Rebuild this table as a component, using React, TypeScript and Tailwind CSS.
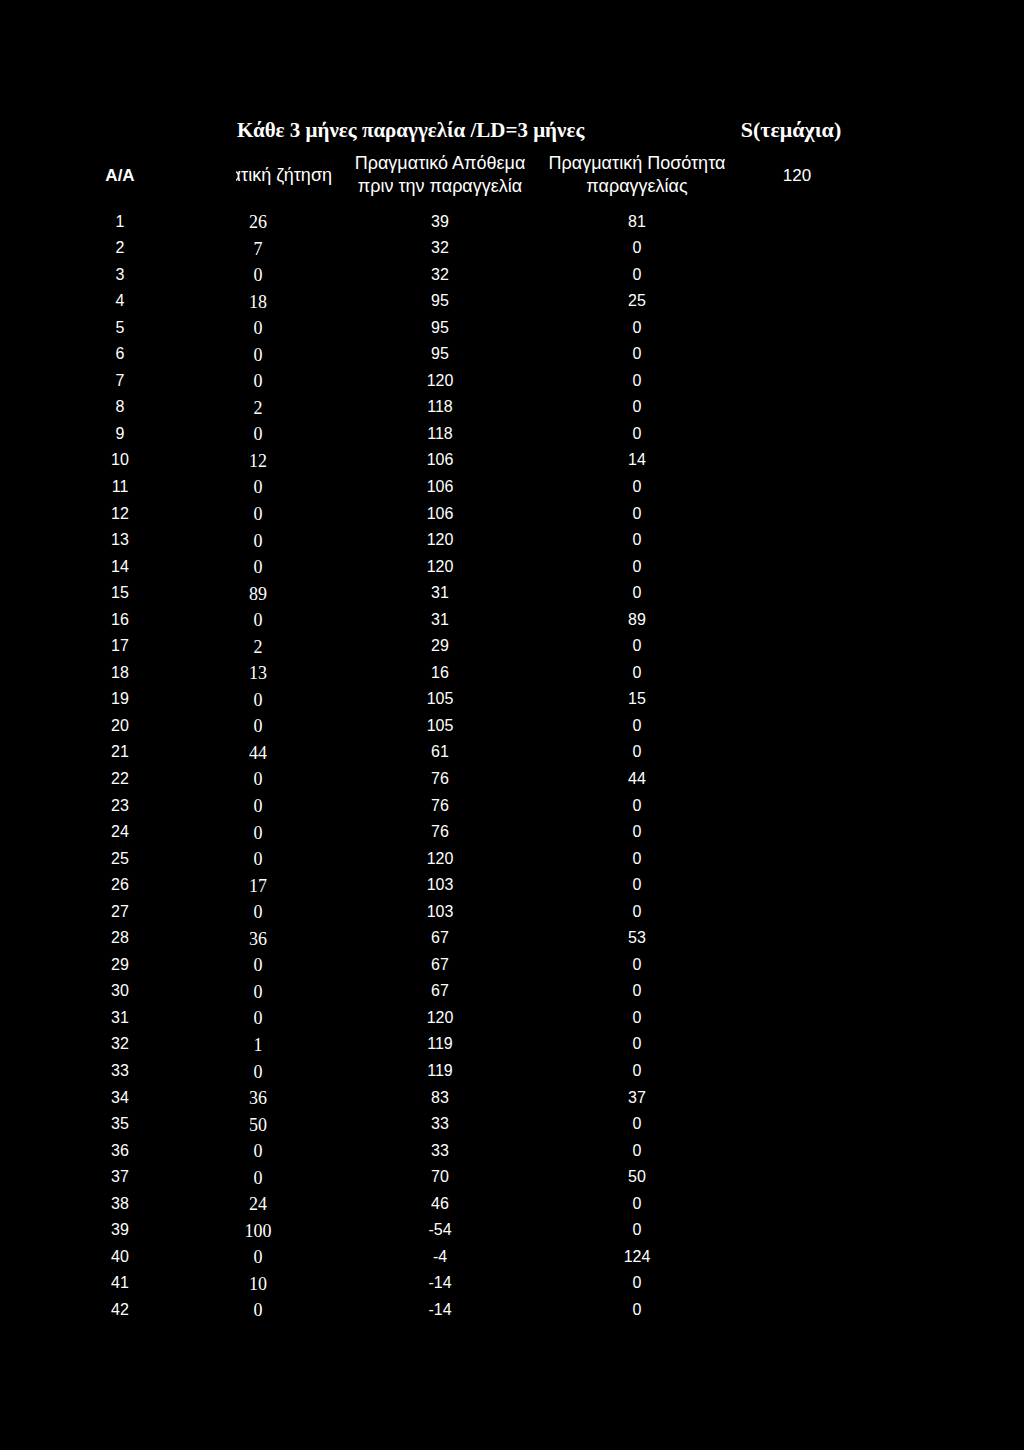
const rows: [number, number, number, number][] = [
  [1, 26, 39, 81],
  [2, 7, 32, 0],
  [3, 0, 32, 0],
  [4, 18, 95, 25],
  [5, 0, 95, 0],
  [6, 0, 95, 0],
  [7, 0, 120, 0],
  [8, 2, 118, 0],
  [9, 0, 118, 0],
  [10, 12, 106, 14],
  [11, 0, 106, 0],
  [12, 0, 106, 0],
  [13, 0, 120, 0],
  [14, 0, 120, 0],
  [15, 89, 31, 0],
  [16, 0, 31, 89],
  [17, 2, 29, 0],
  [18, 13, 16, 0],
  [19, 0, 105, 15],
  [20, 0, 105, 0],
  [21, 44, 61, 0],
  [22, 0, 76, 44],
  [23, 0, 76, 0],
  [24, 0, 76, 0],
  [25, 0, 120, 0],
  [26, 17, 103, 0],
  [27, 0, 103, 0],
  [28, 36, 67, 53],
  [29, 0, 67, 0],
  [30, 0, 67, 0],
  [31, 0, 120, 0],
  [32, 1, 119, 0],
  [33, 0, 119, 0],
  [34, 36, 83, 37],
  [35, 50, 33, 0],
  [36, 0, 33, 0],
  [37, 0, 70, 50],
  [38, 24, 46, 0],
  [39, 100, -54, 0],
  [40, 0, -4, 124],
  [41, 10, -14, 0],
  [42, 0, -14, 0],
];

const grid = 'grid grid-cols-[80px_196px_168px_226px_94px] ml-[80px]';
const sans = "font-['Liberation_Sans',Arial,sans-serif]";
const serif = "font-['Liberation_Serif','Times_New_Roman',serif]";

export default function App() {
  return (
    <div className="min-h-[1450px] w-[1024px] bg-black text-white pt-[116px]">
      {/* title row */}
      <div className={`${grid} h-[28px] leading-[28px] ${serif} font-bold text-[21px]`}>
        <div className="col-start-2 col-span-3 pl-[77px] whitespace-nowrap">
          Κάθε 3 μήνες παραγγελία /LD=3 μήνες
        </div>
        <div className="whitespace-nowrap flex justify-center -ml-[12px] text-[22px]">S(τεμάχια)</div>
      </div>

      {/* column headers */}
      <div className={`${grid} mt-[8px] h-[46px] items-center ${sans} text-[18px] leading-[23px]`}>
        <div className="text-center font-bold text-[17px]">A/A</div>
        {/* the first word is cut by the cell edge, as in the sheet */}
        <div className="flex justify-end overflow-hidden ml-[76px] pr-[24px] whitespace-nowrap">
          Πραγματική ζήτηση
        </div>
        <div className="flex flex-col items-center whitespace-nowrap">
          <span>Πραγματικό Απόθεμα</span>
          <span>πριν την παραγγελία</span>
        </div>
        <div className="flex flex-col items-center whitespace-nowrap">
          <span>Πραγματική Ποσότητα</span>
          <span>παραγγελίας</span>
        </div>
        <div className="text-center text-[17px]">120</div>
      </div>

      {/* data */}
      <div className="mt-[10px]">
        {rows.map(([n, demand, stock, qty]) => (
          <div key={n} className={`${grid} h-[26.56px] items-center`}>
            <div className={`text-center ${sans} text-[16px]`}>{n}</div>
            <div className={`text-center ${serif} text-[18px] scale-y-110`}>{demand}</div>
            <div className={`text-center ${sans} text-[16px]`}>{stock}</div>
            <div className={`text-center ${sans} text-[16px]`}>{qty}</div>
            <div />
          </div>
        ))}
      </div>
    </div>
  );
}
